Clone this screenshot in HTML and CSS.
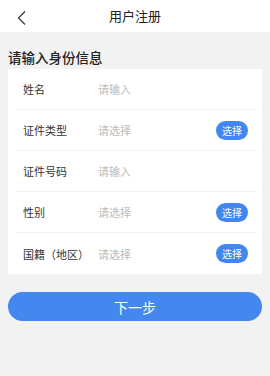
FILE: index.html
```html
<!DOCTYPE html>
<html lang="zh-CN">
<head>
  <meta charset="UTF-8">
  <meta name="viewport" content="width=device-width, initial-scale=1.0">
  <title>用户注册</title>
  <link rel="stylesheet" href="styles.css">
</head>
<body>
  <div class="header">
    <svg class="back" width="10" height="16" viewBox="0 0 10 16">
      <polyline points="8,1.5 1.5,8 8,14.5" fill="none" stroke="#333" stroke-width="1.2"/>
    </svg>
    <span class="title">用户注册</span>
  </div>

  <div class="section-title">请输入身份信息</div>

  <div class="card">
    <div class="row">
      <span class="label">姓名</span>
      <span class="value">请输入</span>
    </div>
    <div class="row">
      <span class="label">证件类型</span>
      <span class="value">请选择</span>
      <button class="pick">选择</button>
    </div>
    <div class="row">
      <span class="label">证件号码</span>
      <span class="value">请输入</span>
    </div>
    <div class="row">
      <span class="label">性别</span>
      <span class="value">请选择</span>
      <button class="pick">选择</button>
    </div>
    <div class="row last">
      <span class="label">国籍（地区）</span>
      <span class="value">请选择</span>
      <button class="pick">选择</button>
    </div>
  </div>

  <button class="next">下一步</button>
</body>
</html>
```

FILE: styles.css
```css
body {
  margin: 0;
  background-color: #f2f2f2;
  font-family: "Noto Sans CJK SC", "Noto Sans", sans-serif;
  color: #333;
}

.header {
  position: relative;
  height: 32px;
  background-color: #fff;
  display: flex;
  align-items: center;
  justify-content: center;
}

.header .back {
  position: absolute;
  left: 17px;
  top: 10px;
}

.header .title {
  font-size: 13px;
  color: #222;
  line-height: 16px;
}

.section-title {
  padding: 16px 8px 2px;
  font-size: 13.5px;
  line-height: 19px;
  font-weight: 500;
  color: #222;
}

.card {
  margin: 0 8px;
  background-color: #fff;
}

.row {
  height: 41px;
  margin: 0 5px 0 8px;
  padding: 0 9px 0 7px;
  display: flex;
  align-items: center;
  border-bottom: 1px solid #f1f1f1;
  box-sizing: border-box;
}

.row.last {
  border-bottom: none;
}

.label {
  width: 75px;
  font-size: 11px;
  color: #333;
}

.value {
  flex: 1;
  font-size: 11px;
  color: #bbb;
}

.pick {
  width: 32px;
  height: 19px;
  padding: 0;
  border: none;
  border-radius: 10px;
  background-color: #4286ef;
  color: #fff;
  font-family: inherit;
  font-size: 10px;
  line-height: 19px;
}

.next {
  display: block;
  width: 254px;
  height: 29px;
  margin: 18px 8px 0;
  padding: 0;
  border: none;
  border-radius: 15px;
  background-color: #4487ef;
  color: #fff;
  font-family: inherit;
  font-size: 14px;
}
```
